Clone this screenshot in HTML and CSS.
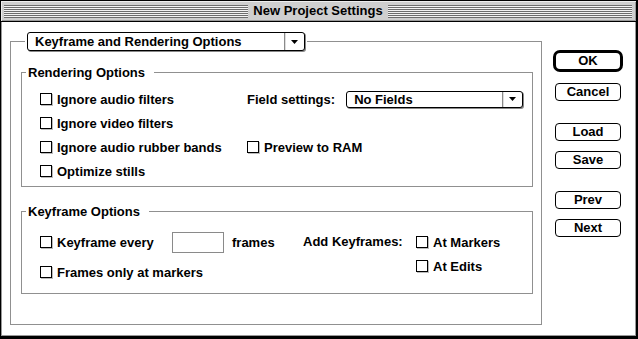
FILE: index.html
```html
<!DOCTYPE html>
<html lang="en">
<head>
    <meta charset="UTF-8">
    <title>New Project Settings</title>
    <link rel="stylesheet" href="styles.css">
</head>
<body>
    <div class="window">
        <div class="titlebar">
            <div class="stripes"></div>
            <span class="title">New Project Settings</span>
            <div class="stripes"></div>
        </div>

        <div class="content">
            <fieldset class="panel">
                <legend class="panel-legend">
                    <div class="popup popup-wide">
                        <span class="popup-text">Keyframe and Rendering Options</span>
                        <span class="popup-arrow"><svg width="7" height="4" viewBox="0 0 7 4"><path d="M0 0h7L3.5 4z"/></svg></span>
                    </div>
                </legend>

                <fieldset class="group group-render">
                    <legend>Rendering Options</legend>
                    <div class="render-grid">
                        <label class="check"><span class="box"></span>Ignore audio filters</label>
                        <div class="field-row">
                            <span>Field settings:</span>
                            <div class="popup popup-small">
                                <span class="popup-text">No Fields</span>
                                <span class="popup-arrow"><svg width="7" height="4" viewBox="0 0 7 4"><path d="M0 0h7L3.5 4z"/></svg></span>
                            </div>
                        </div>
                        <label class="check"><span class="box"></span>Ignore video filters</label>
                        <span></span>
                        <label class="check"><span class="box"></span>Ignore audio rubber bands</label>
                        <label class="check"><span class="box"></span>Preview to RAM</label>
                        <label class="check"><span class="box"></span>Optimize stills</label>
                    </div>
                </fieldset>

                <fieldset class="group group-keyframe">
                    <legend>Keyframe Options</legend>
                    <div class="kf-body">
                        <div class="kf-left">
                            <div class="kf-row">
                                <label class="check kf-every"><span class="box"></span>Keyframe every</label>
                                <span class="text-field"></span>
                                <span>frames</span>
                            </div>
                            <label class="check"><span class="box"></span>Frames only at markers</label>
                        </div>
                        <div class="kf-add">
                            <span class="kf-add-label">Add Keyframes:</span>
                            <div class="kf-checks">
                                <label class="check"><span class="box"></span>At Markers</label>
                                <label class="check"><span class="box"></span>At Edits</label>
                            </div>
                        </div>
                    </div>
                </fieldset>
            </fieldset>

            <div class="buttons">
                <button class="btn btn-default">OK</button>
                <button class="btn btn-cancel">Cancel</button>
                <div class="btn-pair">
                    <button class="btn">Load</button>
                    <button class="btn">Save</button>
                </div>
                <div class="btn-pair">
                    <button class="btn">Prev</button>
                    <button class="btn">Next</button>
                </div>
            </div>
        </div>
    </div>
</body>
</html>
```

FILE: styles.css
```css
body {
    margin: 0;
    background-color: #fff;
    font-family: "Liberation Sans", Arial, sans-serif;
    font-size: 13px;
    font-weight: bold;
    color: #000;
}
.window {
    width: 638px;
    height: 339px;
    box-sizing: border-box;
    display: flex;
    flex-direction: column;
    border: 1px solid #000;
    border-right-width: 2px;
    border-bottom-width: 3px;
}

/* title bar */
.titlebar {
    height: 20px;
    flex-shrink: 0;
    display: flex;
    align-items: center;
    padding: 0 4px 0 3px;
    background-color: #cfcfcf;
    border-bottom: 1px solid #000;
    box-shadow: inset 1px 1px 0 #eee, inset -1px -1px 0 #999;
}
.stripes {
    flex: 1;
    height: 13px;
    background: repeating-linear-gradient(to bottom, #6e6e6e 0 1px, #f4f4f4 1px 2px);
}
.title {
    padding: 0 5px;
    line-height: 18px;
}

/* dialog body */
.content {
    flex: 1;
    display: flex;
    align-items: flex-start;
    background-color: #fff;
    border: 1px solid #999;
    border-top: none;
}
fieldset {
    margin: 0;
    min-width: 0;
    box-sizing: border-box;
    border: 1px solid #909090;
}
.panel {
    width: 532px;
    margin: 10px 0 0 8px;
    padding: 0 0 30px;
}
.panel-legend {
    margin-left: 14px;
    padding: 0 2px;
}
.group {
    margin: 0 8px 0 10px;
    padding: 0;
}
.group legend {
    margin-left: -14px;
    padding: 0 9px 0 2px;
    line-height: 15px;
}
.group-render {
    margin-top: 14px;
    padding: 7px 0 3px 18px;
}
.group-keyframe {
    margin-top: 17px;
    padding: 12px 0 13px 18px;
}

/* pop-up menus */
.popup {
    display: flex;
    box-sizing: border-box;
    border: 1px solid #000;
    border-radius: 3px;
    box-shadow: 1px 1px 0 #888;
    background-color: #fff;
}
.popup-wide {
    width: 278px;
    height: 19px;
}
.popup-small {
    width: 177px;
    height: 17px;
}
.popup-text {
    flex: 1;
    padding-left: 7px;
    line-height: 16px;
}
.popup-wide .popup-text {
    line-height: 17px;
}
.popup-arrow {
    width: 19px;
    display: flex;
    align-items: center;
    justify-content: center;
    border-left: 1px solid #8a8a8a;
    box-shadow: inset 1px 0 0 #ddd;
}

/* checkboxes */
.check {
    display: flex;
    align-items: center;
    gap: 5px;
    height: 16px;
}
.box {
    width: 12px;
    height: 12px;
    box-sizing: border-box;
    border: 1px solid #000;
    box-shadow: 1px 1px 0 #bbb;
    background-color: #fff;
}

.render-grid {
    display: grid;
    grid-template-columns: 207px 1fr;
    grid-auto-rows: 24px;
    align-items: center;
}
.field-row {
    display: flex;
    align-items: center;
    gap: 11px;
}

/* keyframe options */
.kf-body {
    display: flex;
}
.kf-left {
    width: 263px;
    display: flex;
    flex-direction: column;
    gap: 11px;
}
.kf-row {
    display: flex;
    align-items: center;
    height: 22px;
}
.kf-every {
    width: 132px;
}
.text-field {
    width: 52px;
    height: 21px;
    box-sizing: border-box;
    margin-right: 8px;
    border: 1px solid #8a8a8a;
}
.kf-add {
    display: flex;
    align-items: flex-start;
    padding-top: 3px;
}
.kf-add-label {
    width: 113px;
    line-height: 16px;
}
.kf-checks {
    display: flex;
    flex-direction: column;
    gap: 8px;
}

/* buttons */
.buttons {
    width: 70px;
    margin-left: 11px;
    padding-top: 28px;
    display: flex;
    flex-direction: column;
    align-items: center;
}
.btn {
    width: 66px;
    height: 18px;
    padding: 0;
    font: inherit;
    line-height: 16px;
    color: #000;
    background-color: #fff;
    border: 1px solid #000;
    border-radius: 4px;
}
.btn-default {
    width: 70px;
    height: 22px;
    border: 3px solid #000;
    border-radius: 7px;
}
.btn-cancel {
    margin-top: 11px;
}
.btn-pair {
    display: flex;
    flex-direction: column;
    gap: 10px;
    margin-top: 22px;
}
```
